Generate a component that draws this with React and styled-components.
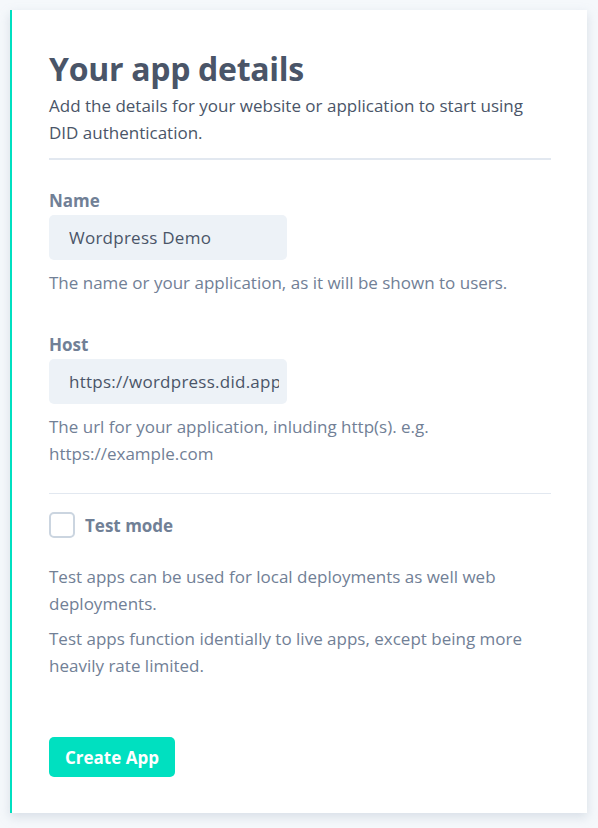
import React from 'react';
import styled, { createGlobalStyle } from 'styled-components';

const GlobalStyle = createGlobalStyle`
    html, body {
        margin:0;
        padding:0;
        background:#f5f8fb;
    }
    body {
        font-family: "Open Sans", "Noto Sans", sans-serif;
    }
`

const Page = styled.div`
    padding:10px 11px 15px 10px;
`
const Card = styled.div`
    background:white;
    border-left:2px solid #00dfc0;
    box-shadow: 0 4px 10px rgba(160,174,192,0.35);
    padding:40px 36px 36px 37px;
`
const Title = styled.h1`
    margin:0;
    font-size:32px;
    line-height:38px;
    font-weight:700;
    color:#4a5568;
    letter-spacing:-0.3px;
`
const Lead = styled.p`
    margin:4px 0 0;
    font-size:17px;
    line-height:27px;
    color:#4a5568;
`
const Divider = styled.hr`
    margin:${({ thick }) => thick ? '12px 0 30px' : '26px 0 18px'};
    border:0;
    height:${({ thick }) => thick ? '2px' : '1px'};
    background:#e2e8f0;
`
const Field = styled.div`
    margin-bottom:${({ last }) => last ? '0' : '38px'};
`
const Label = styled.label`
    display:block;
    font-size:17px;
    line-height:22px;
    font-weight:700;
    color:#718096;
    margin-bottom:3px;
`
const Input = styled.input`
    display:block;
    width:238px;
    height:45px;
    box-sizing:border-box;
    padding:0 8px 0 20px;
    border:0;
    border-radius:5px;
    background:#edf2f7;
    font-family:inherit;
    font-size:17px;
    letter-spacing:0.25px;
    color:#4a5568;
    outline:none;
`
const Help = styled.p`
    margin:${({ tight }) => tight ? '8px 0 0' : '9px 0 0'};
    font-size:17px;
    line-height:27px;
    color:#718096;
`
const CheckRow = styled.label`
    display:flex;
    align-items:center;
    gap:10px;
    font-size:17px;
    font-weight:700;
    color:#718096;
`
const Box = styled.span`
    width:26px;
    height:26px;
    box-sizing:border-box;
    border:2px solid #cbd5e0;
    border-radius:5px;
`
const Notes = styled.div`
    margin-top:25px;
`
const Button = styled.button`
    margin-top:58px;
    height:40px;
    padding:0 16px;
    border:0;
    border-radius:5px;
    background:#00e0c0;
    color:white;
    font-family:inherit;
    font-size:17px;
    font-weight:700;
`

export default function App() {
    return (
        <Page>
            <GlobalStyle />
            <Card>
                <Title>Your app details</Title>
                <Lead>Add the details for your website or application to start using DID authentication.</Lead>
                <Divider thick />
                <Field>
                    <Label>Name</Label>
                    <Input defaultValue="Wordpress Demo" />
                    <Help>The name or your application, as it will be shown to users.</Help>
                </Field>
                <Field last>
                    <Label>Host</Label>
                    <Input defaultValue="https://wordpress.did.app" />
                    <Help>The url for your application, inluding http(s). e.g. https://example.com</Help>
                </Field>
                <Divider />
                <CheckRow>
                    <Box />
                    Test mode
                </CheckRow>
                <Notes>
                    <Help>Test apps can be used for local deployments as well web deployments.</Help>
                    <Help tight>Test apps function identially to live apps, except being more heavily rate limited.</Help>
                </Notes>
                <Button>Create App</Button>
            </Card>
        </Page>
    )
}
